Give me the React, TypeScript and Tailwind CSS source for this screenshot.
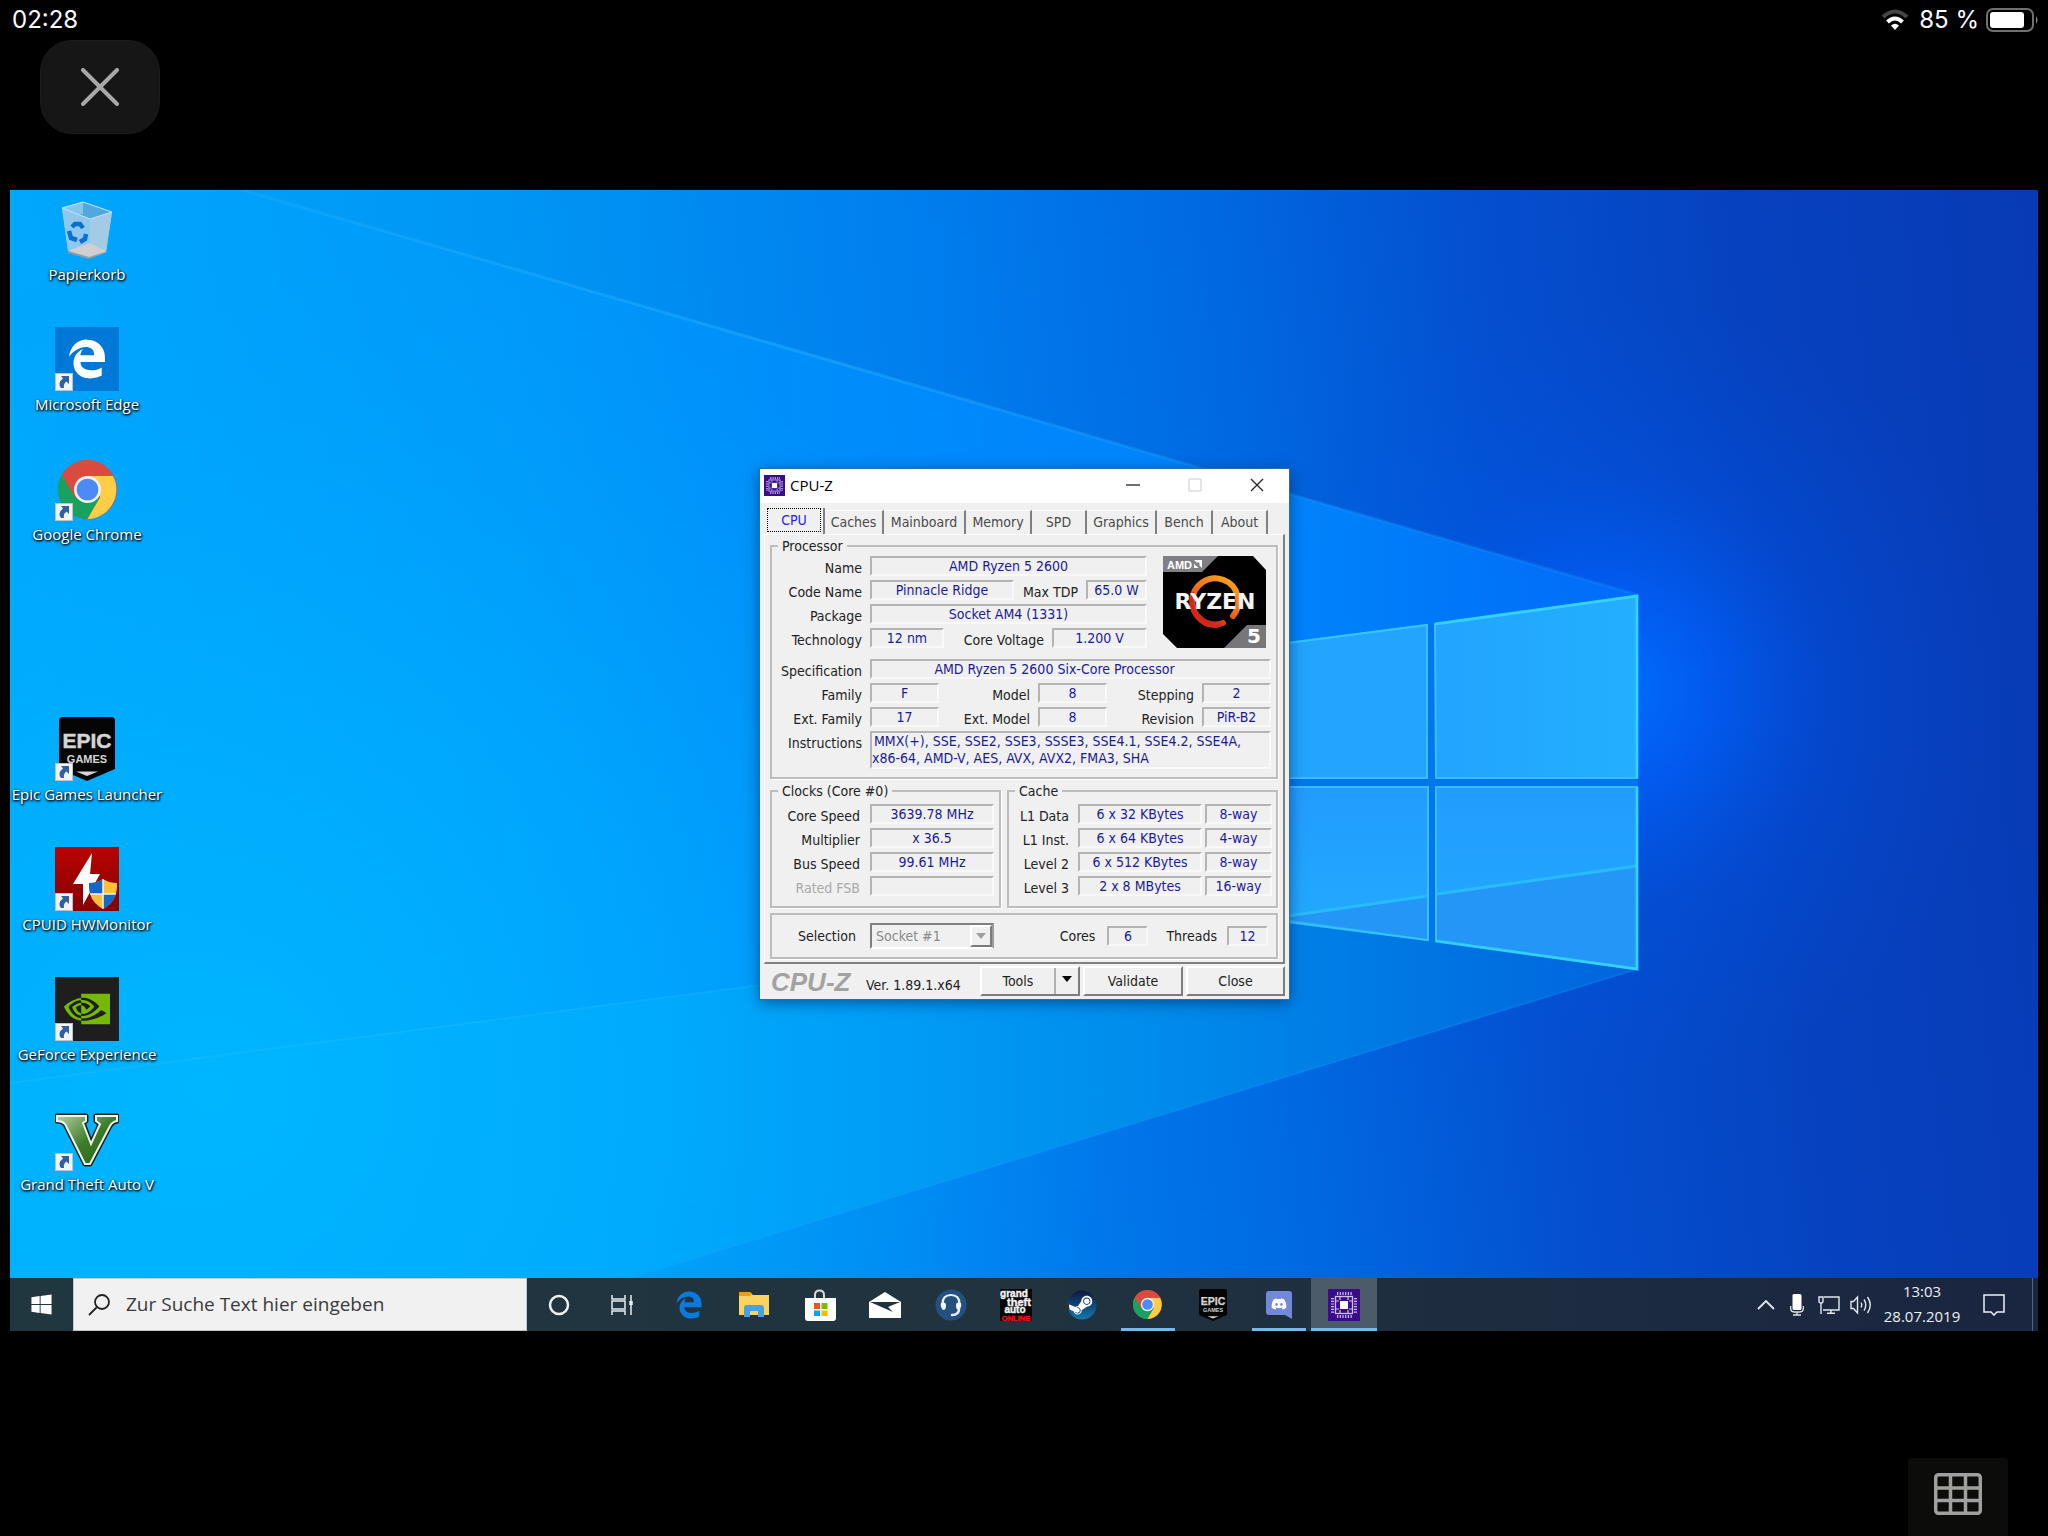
import React from "react";
import { FaDiscord, FaEdgeLegacy, FaSteam, FaWindows } from "react-icons/fa";
import { SiNvidia } from "react-icons/si";

function ChromeLogo({ className }: { className: string }) {
  return (
    <svg viewBox="0 0 48 48" className={className} aria-hidden="true">
      <circle cx="24" cy="24" r="24" fill="#db4a3e" />
      <path d="M3.2 12A24 24 0 0 0 24 48L34.4 30 13.6 30Z" fill="#18a15f" />
      <path d="M24 48A24 24 0 0 0 44.8 13H24L34.4 30Z" fill="#ffce44" />
      <path d="M3.2 12A24 24 0 0 1 45 13H24L13.6 30Z" fill="#db4a3e" />
      <circle cx="24" cy="24" r="11" fill="#f1f1f1" />
      <circle cx="24" cy="24" r="8.8" fill="#4c8bf5" />
    </svg>
  );
}

function EpicLogo({ className }: { className: string }) {
  return (
    <svg viewBox="0 0 56 64" className={className} aria-hidden="true">
      <path d="M4 0H52Q56 0 56 4V52L28 64L0 52V4Q0 0 4 0Z" fill="#050505" />
      <text x="28" y="31" textAnchor="middle" fontFamily="'Liberation Sans Narrow','Liberation Sans',sans-serif" fontWeight="700" fontSize="21" fill="#d5d5d5" stroke="#d5d5d5" strokeWidth="0.5">
        EPIC
      </text>
      <text x="28" y="46" textAnchor="middle" fontFamily="'Liberation Sans',sans-serif" fontWeight="700" fontSize="11" fill="#d5d5d5">
        GAMES
      </text>
      <path d="M17 54.5H39L28 59Z" fill="#d5d5d5" />
    </svg>
  );
}

function ChipLogo({ className }: { className: string }) {
  return (
    <svg viewBox="0 0 32 32" className={className} aria-hidden="true">
      <rect width="32" height="32" fill="#3a0c8c" />
      <g stroke="#cdbff0" fill="none">
        <rect x="7.5" y="7.5" width="17" height="17" strokeWidth="1.3" />
        <path d="M9 4.500H24M9 27.500H24M4.500 9V24M27.500 9V24" strokeWidth="3" strokeDasharray="1.2 1.5" />
        <path d="M12 8v3M20 8v3M12 24v-3M20 24v-3M8 12h3M24 12h-3M8 20h3M24 20h-3" strokeWidth="1.2" />
      </g>
      <rect x="12" y="12" width="8" height="8" fill="#fff" />
    </svg>
  );
}

function DiscordLogo() {
  return (
    <span className="relative flex h-7 w-[26px] justify-center pt-[5px]">
      <svg viewBox="0 0 26 28" className="absolute inset-0 h-7 w-[26px]" aria-hidden="true">
        <path d="M3 0H23Q26 0 26 3V28L19 24H3Q0 24 0 21V3Q0 0 3 0Z" fill="#7289da" />
      </svg>
      <FaDiscord className="relative size-4 text-white" />
    </span>
  );
}

function RecycleBin() {
  return (
    <svg viewBox="0 0 64 64" className="size-16" aria-hidden="true">
      <path d="M7 11 28 5 57 15 51 55 34 61 13 54Z" fill="#9fd0ee" fillOpacity=".85" />
      <path d="M7 11 28 5 57 15 35 22Z" fill="#4fa9dc" />
      <path d="M7 11 28 5V17L22 17Z" fill="#85c7ea" />
      <path d="M35 22 57 15 51 55 34 61Z" fill="#a3cbe4" />
      <path d="M7 11 35 22 34 61 13 54Z" fill="#8fc8ec" />
      <path d="M13 54 34 46 51 54 34 60Z" fill="#d0d0d4" />
      <path d="M13 54v2l21 6 17-6v-1l-17 5Z" fill="#9a9aa0" />
      <path d="M7 11 28 5 57 15 35 22Z" fill="none" stroke="#c5e4f5" strokeWidth="1" />
      <g fill="none" stroke="#0a6fce" strokeWidth="4.5">
        <path d="M17 30 20 27H25L28 31" />
        <path d="M14 34 16 41 22 43" />
        <path d="M31 37 30 42 25 45" />
      </g>
    </svg>
  );
}

function Monitor() {
  return (
    <svg viewBox="0 0 64 64" className="size-16" aria-hidden="true">
      <defs>
        <linearGradient id="hwRed" x1="0" y1="0" x2="0" y2="1">
          <stop offset="0" stopColor="#b80303" />
          <stop offset="1" stopColor="#860000" />
        </linearGradient>
        <clipPath id="shield">
          <path d="M34 36Q42 36 48 32Q54 36 62 36Q63 54 48 62Q33 54 34 36Z" />
        </clipPath>
      </defs>
      <rect width="64" height="64" fill="url(#hwRed)" />
      <path d="M37 6 18 37H28V58L45 27H35Z" fill="#fff" />
      <g clipPath="url(#shield)">
        <rect x="32" y="30" width="32" height="34" fill="#ffc038" />
        <path d="M32 30H48V47H32ZM48 47H64V64H48Z" fill="#1468c8" />
        <path d="M48 30V64M32 47H64" stroke="#f4f4f4" strokeWidth="1.5" />
      </g>
    </svg>
  );
}

function VLogo() {
  return (
    <svg viewBox="0 0 64 64" className="size-16" aria-hidden="true">
      <defs>
        <linearGradient id="vGreen" x1="0" y1="0" x2="1" y2="1">
          <stop offset="0" stopColor="#b5d0a5" />
          <stop offset=".5" stopColor="#3d7d2a" />
          <stop offset="1" stopColor="#1f6312" />
        </linearGradient>
      </defs>
      <path
        d="M2 9H31V14L28 16 36 37 45 17 41 14V9H62V14Q57 15 55 19L35 57H30L10 17Q7 14 2 14Z"
        fill="#16240f"
        stroke="#16240f"
        strokeWidth="5"
        strokeLinejoin="round"
      />
      <path
        d="M2 9H31V14L28 16 36 37 45 17 41 14V9H62V14Q57 15 55 19L35 57H30L10 17Q7 14 2 14Z"
        fill="url(#vGreen)"
        stroke="#f2f2f2"
        strokeWidth="2"
      />
    </svg>
  );
}

function ShortcutBadge() {
  return (
    <svg viewBox="0 0 18 18" className="absolute bottom-0 left-0 size-[18px]" aria-hidden="true">
      <rect x=".5" y=".5" width="17" height="17" fill="#f4f4f4" stroke="#b9c3cc" />
      <path d="M6 3H14V11L11.5 8.500Q8 11 9 15H6Q2 10 8 5.500Z" fill="#2f5fa5" />
    </svg>
  );
}

type DesktopItem = { name: string; icon: React.ReactNode; shortcut: boolean };

const desktopItems: (DesktopItem | null)[] = [
  { name: "Papierkorb", icon: <RecycleBin />, shortcut: false },
  {
    name: "Microsoft Edge",
    icon: (
      <span className="flex size-16 items-center justify-center bg-[#0078d7] text-white">
        <FaEdgeLegacy className="size-10" />
      </span>
    ),
    shortcut: true,
  },
  { name: "Google Chrome", icon: <ChromeLogo className="size-[59px]" />, shortcut: true },
  null,
  { name: "Epic Games Launcher", icon: <EpicLogo className="h-16 w-14" />, shortcut: true },
  { name: "CPUID HWMonitor", icon: <Monitor />, shortcut: true },
  {
    name: "GeForce Experience",
    icon: (
      <span className="flex size-16 items-center justify-center bg-[#1e1e1e] text-[#76b900]">
        <SiNvidia className="size-[46px]" />
      </span>
    ),
    shortcut: true,
  },
  { name: "Grand Theft Auto V", icon: <VLogo />, shortcut: true },
];

function Wallpaper() {
  return (
    <svg viewBox="0 0 2028 1088" preserveAspectRatio="none" className="absolute inset-0 size-full" aria-hidden="true">
      <defs>
        <linearGradient id="base" gradientUnits="userSpaceOnUse" x1="0" y1="200" x2="2028" y2="0">
          <stop offset="0" stopColor="#00a8fc" />
          <stop offset=".25" stopColor="#0096f4" />
          <stop offset=".45" stopColor="#007eee" />
          <stop offset=".6" stopColor="#0068e0" />
          <stop offset=".72" stopColor="#0450d0" />
          <stop offset=".85" stopColor="#0642c0" />
          <stop offset="1" stopColor="#083ab4" />
        </linearGradient>
        <linearGradient id="beam" gradientUnits="userSpaceOnUse" x1="0" y1="0" x2="1630" y2="0">
          <stop offset="0" stopColor="#00a8ff" stopOpacity=".3" />
          <stop offset=".3" stopColor="#009cff" stopOpacity=".55" />
          <stop offset=".6" stopColor="#008cff" stopOpacity=".8" />
          <stop offset=".8" stopColor="#0086ff" stopOpacity=".9" />
          <stop offset="1" stopColor="#0070fa" stopOpacity=".8" />
        </linearGradient>
        <linearGradient id="beamLow" gradientUnits="userSpaceOnUse" x1="0" y1="0" x2="1630" y2="0">
          <stop offset="0" stopColor="#00b4ff" />
          <stop offset=".35" stopColor="#00a8fa" />
          <stop offset=".7" stopColor="#008cec" />
          <stop offset="1" stopColor="#0064dc" />
        </linearGradient>
        <radialGradient id="halo" gradientUnits="userSpaceOnUse" cx="1600" cy="500" r="400">
          <stop offset="0" stopColor="#0070ff" />
          <stop offset=".25" stopColor="#0062ff" stopOpacity=".7" />
          <stop offset=".55" stopColor="#0058f0" stopOpacity=".25" />
          <stop offset="1" stopColor="#0050e0" stopOpacity="0" />
        </radialGradient>
        <radialGradient id="lowGlow" gradientUnits="userSpaceOnUse" cx="200" cy="900" r="900">
          <stop offset="0" stopColor="#00b6ff" />
          <stop offset=".5" stopColor="#00aeff" stopOpacity=".6" />
          <stop offset="1" stopColor="#00a0ff" stopOpacity="0" />
        </radialGradient>
        <linearGradient id="pane" x1="0" y1="0" x2="1" y2="0">
          <stop offset="0" stopColor="#22a4ff" />
          <stop offset="1" stopColor="#22b0ff" />
        </linearGradient>
        <linearGradient id="paneLow" x1="0" y1="0" x2="0" y2="1">
          <stop offset="0" stopColor="#229cff" />
          <stop offset="1" stopColor="#22aaff" />
        </linearGradient>
        <linearGradient id="ray" gradientUnits="userSpaceOnUse" x1="232" y1="0" x2="1628" y2="0">
          <stop offset="0" stopColor="#30b8ff" stopOpacity=".2" />
          <stop offset=".4" stopColor="#20a8ff" stopOpacity=".6" />
          <stop offset=".7" stopColor="#20a0ff" stopOpacity=".3" />
          <stop offset="1" stopColor="#20a0ff" stopOpacity=".2" />
        </linearGradient>
      </defs>
      <rect width="2028" height="1088" fill="url(#base)" />
      <rect width="2028" height="1088" fill="url(#halo)" />
      <path d="M0 0H232L1628 405V779L620 1088H0Z" fill="url(#beam)" />
      <path d="M0 893 1270 727 1627 676V779L620 1088H0Z" fill="url(#beamLow)" />
      <rect width="2028" height="1088" fill="url(#lowGlow)" />
      <path d="M232 0 1628 405" stroke="url(#ray)" strokeWidth="3" />
      <path d="M620 1088 1628 779" stroke="#20a8ff" strokeOpacity=".2" strokeWidth="2" />
      <path d="M0 893 1270 727" stroke="#40c8ff" strokeOpacity=".2" strokeWidth="2" />
      <path d="M1200 588H1627V597H1200ZM1417 434 1425 433V752L1417 751Z" fill="#0078ec" />
      <g stroke="#3cbcff" strokeWidth="2">
        <path d="M1200 463 1417 435V588H1200Z" fill="#22a4ff" />
        <path d="M1425 434 1627 406V588H1426Z" fill="url(#pane)" />
        <path d="M1200 597H1418V750L1200 722Z" fill="url(#paneLow)" />
        <path d="M1426 597H1627V779L1426 751Z" fill="url(#paneLow)" />
      </g>
      <path d="M1270 727 1417 706V749L1270 730ZM1427 704 1626 676V778L1427 751Z" fill="#2496f6" />
      <path d="M1270 727 1417 706M1427 704 1627 676" stroke="#28bcff" strokeWidth="3" />
      <path d="M1200 463 1417 435M1425 434 1627 406V588M1627 597V779L1426 751M1418 750 1200 720" fill="none" stroke="#30d0ff" strokeOpacity=".5" strokeWidth="2" />
      <path d="M1425 434 1627 406V588M1627 597V779L1426 751" fill="none" stroke="#34d8ff" strokeOpacity=".7" strokeWidth="3" />
    </svg>
  );
}

function Label({ children, className = "" }: { children: React.ReactNode; className?: string }) {
  return <span className={`h-5 pt-0.5 text-right leading-5 whitespace-nowrap ${className}`}>{children}</span>;
}

function Field({ children, className = "" }: { children?: React.ReactNode; className?: string }) {
  return (
    <span
      className={`h-5 border-2 border-t-[#b4b4b4] border-r-[#f9f9f9] border-b-[#f9f9f9] border-l-[#b4b4b4] text-center leading-4 whitespace-nowrap text-[#1c1c90] ${className}`}
    >
      {children}
    </span>
  );
}

function Group({ title, className, children }: { title?: string; className: string; children: React.ReactNode }) {
  return (
    <fieldset className={`min-w-0 border-2 border-[#bdbdbd] shadow-[1px_1px_0_#fff] ${className}`}>
      {title && <legend className="ml-1.5 px-1 leading-5">{title}</legend>}
      {children}
    </fieldset>
  );
}

function RyzenBadge() {
  return (
    <svg viewBox="0 0 103 92" className="h-[92px] w-[103px]" role="img" aria-label="AMD Ryzen 5">
      <defs>
        <linearGradient id="enso" x1=".8" y1="0" x2=".2" y2="1">
          <stop offset="0" stopColor="#f9a11b" />
          <stop offset=".5" stopColor="#ec6a1e" />
          <stop offset="1" stopColor="#c01818" />
        </linearGradient>
        <clipPath id="chip">
          <path d="M0 0H90L103 14V92H14L0 78Z" />
        </clipPath>
      </defs>
      <g clipPath="url(#chip)">
        <rect width="103" height="92" fill="#000" />
        <path d="M0 0H55L39 16H0Z" fill="#808084" />
        <path d="M84 69H103V92H61Z" fill="#77777b" />
      </g>
      <text x="4" y="13" fontFamily="'Liberation Sans',sans-serif" fontWeight="700" fontSize="11" fill="#fff">
        AMD
      </text>
      <path d="M31 4H39V12L36.5 9.500V6.500H33.500ZM31 7.500V12H35.500L33.500 10H33Z" fill="#fff" />
      <path d="M60 67A23 23 0 1 1 70 60" fill="none" stroke="url(#enso)" strokeWidth="6" strokeLinecap="round" />
      <path d="M54 70A24 24 0 0 1 30 38" fill="none" stroke="#d2281c" strokeWidth="4" strokeLinecap="round" />
      <text x="52" y="53" textAnchor="middle" fontFamily="'DejaVu Sans',sans-serif" fontWeight="700" fontSize="22" fill="#f4f4f4">
        RYZEN
      </text>
      <text x="91" y="87" textAnchor="middle" fontFamily="'DejaVu Sans',sans-serif" fontWeight="700" fontSize="20" fill="#fff">
        5
      </text>
    </svg>
  );
}

const tabs = [
  { name: "CPU", width: "w-[60px]" },
  { name: "Caches", width: "w-[59px]" },
  { name: "Mainboard", width: "w-[82px]" },
  { name: "Memory", width: "w-[66px]" },
  { name: "SPD", width: "w-[55px]" },
  { name: "Graphics", width: "w-[70px]" },
  { name: "Bench", width: "w-[56px]" },
  { name: "About", width: "w-[55px]" },
];

const clocks = [
  ["Core Speed", "3639.78 MHz"],
  ["Multiplier", "x 36.5"],
  ["Bus Speed", "99.61 MHz"],
  ["Rated FSB", ""],
];

const caches = [
  ["L1 Data", "6 x 32 KBytes", "8-way"],
  ["L1 Inst.", "6 x 64 KBytes", "4-way"],
  ["Level 2", "6 x 512 KBytes", "8-way"],
  ["Level 3", "2 x 8 MBytes", "16-way"],
];

const raised = "border-2 border-t-white border-l-white border-r-[#7c7c7c] border-b-[#7c7c7c] bg-[#f0f0f0]";

function CpuzWindow() {
  return (
    <section
      aria-label="CPU-Z"
      className="absolute top-[279px] left-[750px] w-[529px] bg-[#f0f0f0] pb-[3px] font-['DejaVu_Sans_Condensed','Noto_Sans',sans-serif] text-[14px] text-[#222] shadow-[0_3px_14px_rgba(0,20,60,.55)] outline outline-[#2a6da8]"
    >
      <header className="flex h-[34px] items-center bg-white pb-0.5 pl-1">
        <ChipLogo className="size-[21px]" />
        <h1 className="ml-[5px] flex-1 font-['Open_Sans',sans-serif] text-[15px] text-black">CPU-Z</h1>
        <button aria-label="Minimieren" className="flex h-8 w-[62px] items-center justify-center">
          <svg viewBox="0 0 14 14" className="size-3.5" stroke="#222" strokeWidth="1.3"><path d="M0 7H14" /></svg>
        </button>
        <button aria-label="Maximieren" disabled className="flex h-8 w-[62px] items-center justify-center">
          <svg viewBox="0 0 14 14" className="size-3.5" stroke="#ccc" fill="none"><path d="M1 1H13V13H1Z" /></svg>
        </button>
        <button aria-label="Schließen" className="mr-px flex h-8 w-[62px] items-center justify-center">
          <svg viewBox="0 0 14 14" className="size-3.5" stroke="#222" strokeWidth="1.3"><path d="M1 1 13 13M13 1 1 13" /></svg>
        </button>
      </header>

      <div role="tablist" className="mx-[5px] flex h-[31px] items-end">
        {tabs.map((tab, index) =>
          index === 0 ? (
            <button key={tab.name} role="tab" aria-selected="true" className={`h-[26px] border-r-2 border-r-[#808080] px-0.5 pb-0.5 text-[#2525f0] ${tab.width}`}>
              <span className="block border border-dotted border-black leading-[22px]">{tab.name}</span>
            </button>
          ) : (
            <button key={tab.name} role="tab" aria-selected="false" className={`h-6 border-t border-r-2 border-t-white border-r-[#808080] text-center leading-[23px] text-[#4a4a4a] ${tab.width}`}>
              {tab.name}
            </button>
          ),
        )}
      </div>

      <div role="tabpanel" className="mx-1 border-t border-r-2 border-b-2 border-l border-t-white border-r-[#808080] border-b-[#808080] border-l-white px-[5px] pt-px pb-[3px]">
        <Group title="Processor" className="h-[243px]">
          <div className="flex justify-between">
            <div className="flex flex-col gap-1">
              <div className="flex gap-2">
                <Label className="w-[90px]">Name</Label>
                <Field className="w-[277px]">AMD Ryzen 5 2600</Field>
              </div>
              <div className="flex gap-2">
                <Label className="w-[90px]">Code Name</Label>
                <Field className="w-36">Pinnacle Ridge</Field>
                <Label className="w-14">Max TDP</Label>
                <Field className="w-[61px]">65.0 W</Field>
              </div>
              <div className="flex gap-2">
                <Label className="w-[90px]">Package</Label>
                <Field className="w-[277px]">Socket AM4 (1331)</Field>
              </div>
              <div className="flex gap-2">
                <Label className="w-[90px]">Technology</Label>
                <Field className="w-[74px]">12 nm</Field>
                <Label className="w-[92px]">Core Voltage</Label>
                <Field className="w-[95px]">1.200 V</Field>
              </div>
            </div>
            <div className="pr-2.5">
              <RyzenBadge />
            </div>
          </div>
          <div className="mt-[11px] grid grid-cols-[90px_69px_83px_69px_79px_69px] gap-x-2 gap-y-1">
            <Label>Specification</Label>
            <Field className="col-span-5 pr-8">AMD Ryzen 5 2600 Six-Core Processor</Field>
            <Label>Family</Label>
            <Field>F</Field>
            <Label>Model</Label>
            <Field>8</Field>
            <Label>Stepping</Label>
            <Field>2</Field>
            <Label>Ext. Family</Label>
            <Field>17</Field>
            <Label>Ext. Model</Label>
            <Field>8</Field>
            <Label>Revision</Label>
            <Field>PiR-B2</Field>
            <Label>Instructions</Label>
            <p className="col-span-5 border-2 border-t-[#b4b4b4] border-r-[#f9f9f9] border-b-[#f9f9f9] border-l-[#b4b4b4] leading-[17px] whitespace-nowrap text-[#1c1c90]">
              <span className="pl-0.5">MMX(+), SSE, SSE2, SSE3, SSSE3, SSE4.1, SSE4.2, SSE4A,</span>
              <br />
              x86-64, AMD-V, AES, AVX, AVX2, FMA3, SHA
            </p>
          </div>
        </Group>

        <div className="mt-0.5 flex gap-1.5">
          <Group title="Clocks (Core #0)" className="h-[127px] w-[231px]">
            <div className="mt-[3px] flex flex-col gap-1">
              {clocks.map(([name, value]) => (
                <div key={name} className="flex gap-2.5">
                  <Label className={value ? "w-[88px]" : "w-[88px] text-[#a9a9a9]"}>{name}</Label>
                  <Field className="w-[124px]">{value}</Field>
                </div>
              ))}
            </div>
          </Group>
          <Group title="Cache" className="h-[127px] flex-1">
            <div className="mt-[3px] flex flex-col gap-1">
              {caches.map(([name, size, way]) => (
                <div key={name} className="flex gap-[3px]">
                  <Label className="mr-1.5 w-[60px]">{name}</Label>
                  <Field className="w-[124px]">{size}</Field>
                  <Field className="w-[67px]">{way}</Field>
                </div>
              ))}
            </div>
          </Group>
        </div>

        <Group className="mt-[5px] flex h-[46px] items-center pr-2">
          <label htmlFor="socket" className="w-[84px] text-right">Selection</label>
          <span className="relative ml-3.5">
            <select
              id="socket"
              disabled
              className="h-[26px] w-[124px] appearance-none border-2 border-t-[#808080] border-r-[#9c9c9c] border-b-white border-l-[#808080] bg-[#f0f0f0] pl-1 text-[#8a8a8a] opacity-100"
            >
              <option>Socket #1</option>
            </select>
            <span className={`pointer-events-none absolute top-0.5 right-0.5 flex h-[22px] w-[22px] items-center justify-center ${raised}`}>
              <svg viewBox="0 0 10 6" className="h-1.5 w-2.5" fill="#a0a0a0"><path d="M0 0H10L5 6Z" /></svg>
            </span>
          </span>
          <span className="ml-auto">Cores</span>
          <Field className="ml-3 w-[41px]">6</Field>
          <span className="ml-[18px]">Threads</span>
          <Field className="ml-2.5 w-[41px]">12</Field>
        </Group>
      </div>

      <footer className="mt-0.5 flex h-[30px] items-center pr-1 pl-[11px]">
        <span className="w-[95px] pt-0.5 font-['Liberation_Sans',sans-serif] text-[26px] font-bold text-[#a2a2a2] italic">CPU-Z</span>
        <span className="pt-2 whitespace-nowrap">Ver. 1.89.1.x64</span>
        <div className="ml-auto flex gap-[3px]">
          <div className={`flex h-[30px] w-[100px] ${raised}`}>
            <button className="flex-1 border-r-2 border-[#b0b0b0]">Tools</button>
            <button aria-label="Weitere Werkzeuge" className="flex w-[22px] items-center justify-center pb-1">
              <svg viewBox="0 0 10 6" className="h-1.5 w-2.5" fill="#000"><path d="M0 0H10L5 6Z" /></svg>
            </button>
          </div>
          <button className={`h-[30px] w-[100px] ${raised}`}>Validate</button>
          <button className={`h-[30px] w-[99px] ${raised}`}>Close</button>
        </div>
      </footer>
    </section>
  );
}

const apps = [
  {
    name: "Microsoft Edge",
    state: "idle",
    icon: <FaEdgeLegacy className="size-7 text-[#0a7ae0]" />,
  },
  {
    name: "Explorer",
    state: "idle",
    icon: (
      <svg viewBox="0 0 30 26" className="h-[26px] w-[30px]">
        <path d="M0 0H11L14 3H30V23H0Z" fill="#fbd35e" />
        <path d="M0 0H11L13 2 11 4H0Z" fill="#e3a018" />
        <path d="M5 25V16Q5 13 8 13H22Q25 13 25 16V25H19V19H11V25Z" fill="#4ba0e0" />
      </svg>
    ),
  },
  {
    name: "Microsoft Store",
    state: "idle",
    icon: (
      <svg viewBox="0 0 32 32" className="size-8">
        <path d="M11 10V6Q11 1.5 15.5 1.5T20 6V10" fill="none" stroke="#d5d9dc" strokeWidth="2" />
        <path d="M1 9H32V29Q32 32 29 32H4Q1 32 1 29Z" fill="#fff" />
        <path d="M10 14H16V20H10Z" fill="#f25022" />
        <path d="M17.5 14H23.500V20H17.500Z" fill="#7fba00" />
        <path d="M10 21.500H16V27H10Z" fill="#00a4ef" />
        <path d="M17.5 21.500H23.500V27H17.500Z" fill="#ffb900" />
      </svg>
    ),
  },
  {
    name: "Mail",
    state: "idle",
    icon: (
      <svg viewBox="0 0 32 26" className="h-[26px] w-8">
        <path d="M0 10 16 0 32 10V26H0Z" fill="#fff" />
        <path d="M1 10H31L19 15 24 20 1 10Z" fill="#20323d" />
      </svg>
    ),
  },
  {
    name: "TeamSpeak",
    state: "idle",
    icon: (
      <svg viewBox="0 0 32 32" className="size-8">
        <circle cx="16" cy="16" r="15.5" fill="#245080" />
        <path d="M7.5 15Q7.5 6 16 6T24.5 15" fill="none" stroke="#e8eef4" strokeWidth="2.2" />
        <path d="M6 14Q11 12 11 16.500T8 21Q5 18 6 14ZM26 14Q21 12 21 16.500T24 21Q27 18 26 14Z" fill="#f4f7fa" />
        <path d="M24 20Q24 26 17 26" fill="none" stroke="#e8eef4" strokeWidth="2.5" strokeLinecap="round" />
      </svg>
    ),
  },
  {
    name: "Grand Theft Auto Online",
    state: "idle",
    icon: (
      <svg viewBox="0 0 32 32" className="size-8">
        <rect width="32" height="32" fill="#050505" />
        <g fontFamily="'Liberation Sans',sans-serif" fontWeight="700" fill="#f4f4f4" stroke="#f4f4f4" strokeWidth=".4" textAnchor="middle">
          <text x="14" y="8" fontSize="10">grand</text>
          <text x="19" y="17" fontSize="11">theft</text>
          <text x="15" y="24" fontSize="10">auto</text>
          <text x="16" y="31.500" fontSize="7.500" fill="#f01414" stroke="#f01414">ONLINE</text>
        </g>
      </svg>
    ),
  },
  {
    name: "Steam",
    state: "idle",
    icon: (
      <span className="relative flex size-[30px] items-center justify-center">
        <span className="absolute inset-[2px] rounded-full bg-white" />
        <svg className="absolute size-0" aria-hidden="true">
          <linearGradient id="steamBlue" x1="0" y1="0" x2="0" y2="1">
            <stop offset="0" stopColor="#10163c" />
            <stop offset="1" stopColor="#1478b0" />
          </linearGradient>
        </svg>
        <FaSteam className="relative size-[30px] fill-[url(#steamBlue)]" />
      </span>
    ),
  },
  { name: "Google Chrome", state: "open", icon: <ChromeLogo className="size-[29px]" /> },
  { name: "Epic Games Launcher", state: "idle", icon: <EpicLogo className="h-8 w-7" /> },
  { name: "Discord", state: "open", icon: <DiscordLogo /> },
  { name: "CPU-Z", state: "active", icon: <ChipLogo className="size-8" /> },
];

const appStates: Record<string, string> = {
  idle: "",
  open: "after:absolute after:bottom-0 after:h-[3px] after:w-[54px] after:bg-[#76b9ed]",
  active: "bg-[#4c5b69] after:absolute after:bottom-0 after:h-[3px] after:w-full after:bg-[#76b9ed]",
};

function Taskbar() {
  return (
    <nav
      aria-label="Taskleiste"
      className="relative flex h-[53px] items-stretch bg-linear-to-r from-[#20373f] via-[#20333f] via-50% to-[#1a2540] font-['Open_Sans',sans-serif] text-white"
    >
      <button aria-label="Start" className="flex w-[63px] items-center justify-center">
        <FaWindows className="size-[23px]" />
      </button>
      <div className="flex w-[454px] items-center gap-4 border border-[#c4c8ca] bg-[#f1f1f1] pl-3.5">
        <svg viewBox="0 0 22 22" className="size-[22px]" fill="none" stroke="#222" strokeWidth="1.8">
          <circle cx="14" cy="8" r="7" />
          <path d="M9 13 1 21" />
        </svg>
        <input
          type="text"
          aria-label="Suche"
          placeholder="Zur Suche Text hier eingeben"
          className="min-w-0 flex-1 bg-transparent text-[19px] text-[#333] outline-none placeholder:text-[#3a3a3a]"
        />
      </div>
      <div className="grid grid-cols-[63px_66px]">
        <button aria-label="Cortana" className="flex items-center justify-center">
          <svg viewBox="0 0 22 22" className="size-[22px]" fill="none" stroke="#f0f0f0" strokeWidth="2.5">
            <circle cx="11" cy="11" r="9" />
          </svg>
        </button>
        <button aria-label="Taskansicht" className="flex items-center justify-center pr-0.5">
          <svg viewBox="0 0 22 22" className="size-[22px]" fill="none" stroke="#e8eef0" strokeWidth="1.5">
            <path d="M1 1V5H14V1M1 21V17H14V21M1 7H14V15H1ZM20 1V21" />
            <path d="M20 7V11" strokeWidth="3.5" />
          </svg>
        </button>
      </div>
      <div className="grid w-[721px] grid-cols-11">
        {apps.map((app) => (
          <button key={app.name} aria-label={app.name} className={`relative flex items-center justify-center ${appStates[app.state]}`}>
            {app.icon}
          </button>
        ))}
      </div>
      <div className="ml-auto flex items-center">
        <svg viewBox="0 0 18 10" className="mr-[15px] h-2.5 w-[18px]" fill="none" stroke="#e4e8ee" strokeWidth="1.8">
          <path d="M1 9 9 1 17 9" />
        </svg>
        <svg viewBox="0 0 14 22" className="mr-[14px] h-[22px] w-3.5" aria-label="Mikrofon">
          <rect x="2.5" y="0" width="9" height="16" rx="1.5" fill="#fff" />
          <path d="M.7 12V15Q1 18 4 18H10Q13 18 13.3 15V12M7 18V21M3 21H11" fill="none" stroke="#dfe3ea" strokeWidth="1.3" />
        </svg>
        <svg viewBox="0 0 22 20" className="mr-[10px] h-5 w-[22px]" fill="none" stroke="#e4e8ee" strokeWidth="1.4" aria-label="Netzwerk">
          <path d="M6 2H21V15H5M13 15V18M9 18.300H17M3 8V19" />
          <path d="M1 2H5V6Q5 8 3 8T1 6Z" />
        </svg>
        <svg viewBox="0 0 22 20" className="mr-2.5 h-5 w-[22px]" fill="none" stroke="#e4e8ee" strokeWidth="1.4" aria-label="Lautstärke">
          <path d="M1 6.500H3.500L7.500 2V18L3.500 13.500H1ZM11 7.500Q12.5 10 11 12.500M14 4.500Q17.5 10 14 15.500M17.500 2Q23 10 17.500 18" />
        </svg>
        <time className="w-20 pb-0.5 text-center text-[15px] leading-[25px] text-[#eef0f4]">
          13:03
          <br />
          28.07.2019
        </time>
        <button aria-label="Benachrichtigungen" className="ml-5 flex h-full w-6 items-center justify-center">
          <svg viewBox="0 0 22 22" className="size-[22px]" fill="none" stroke="#eef0f4" strokeWidth="1.5">
            <path d="M1 1H21V18H14L11 21 8 18H1Z" />
          </svg>
        </button>
        <span className="mr-[5px] ml-[26px] h-[53px] w-px bg-[#5a6478]" />
      </div>
    </nav>
  );
}

export default function App() {
  return (
    <div className="flex min-h-screen flex-col bg-black">
      <header className="flex h-10 items-center justify-between pr-2 pb-px pl-3 font-[Inter,sans-serif] text-2xl text-white">
        <time>02:28</time>
        <div className="flex items-center">
          <svg viewBox="0 0 28 21" className="mr-2.5 h-[21px] w-7" fill="none" aria-label="WLAN">
            <path d="M2 8Q14-3 26 8" stroke="#444" strokeWidth="4" />
            <path d="M6.5 13Q14 6 21.5 13" stroke="#fff" strokeWidth="4" />
            <path d="M10 16.500Q14 13 18 16.500L14 21Z" fill="#fff" />
          </svg>
          <span>85 %</span>
          <svg viewBox="0 0 54 24" className="ml-[7px] h-6 w-[54px]" aria-label="Akku">
            <rect x="1" y="1" width="46" height="22" rx="6" fill="none" stroke="#707070" strokeWidth="2" />
            <rect x="4" y="4" width="34" height="16" rx="3" fill="#fff" />
            <path d="M50 8Q53 12 50 16Z" fill="#8a8a8a" />
          </svg>
        </div>
      </header>

      <button
        aria-label="Schließen"
        className="mb-14 ml-10 flex h-[94px] w-[120px] items-center justify-center rounded-[32px] border border-[#1c1c1c] bg-[#161616]"
      >
        <svg viewBox="0 0 38 38" className="size-[38px]" stroke="#a8a8a8" strokeWidth="4" strokeLinecap="round">
          <path d="M2 2 36 36M36 2 2 36" />
        </svg>
      </button>

      <main className="relative mx-2.5 overflow-hidden bg-[#0084f0]">
        <div className="relative pt-[7px] pb-[41px]">
          <Wallpaper />
          <ul className="relative grid w-[154px] auto-rows-[130px]">
            {desktopItems.map((item, index) =>
              item ? (
                <li key={item.name} className="flex flex-col items-center">
                  <span className="relative flex size-16 items-center justify-center">
                    {item.icon}
                    {item.shortcut && <ShortcutBadge />}
                  </span>
                  <span className="mt-[3px] font-['Open_Sans',sans-serif] text-[15px] leading-5 whitespace-nowrap text-white [text-shadow:1px_1px_2px_#000,0_1px_3px_#000]">
                    {item.name}
                  </span>
                </li>
              ) : (
                <li key={index} aria-hidden="true" />
              ),
            )}
          </ul>
          <CpuzWindow />
        </div>
        <Taskbar />
      </main>

      <button
        aria-label="Tastatur"
        className="mt-auto mr-10 flex h-[78px] w-[100px] justify-center self-end rounded-t bg-[#0c0c0b] pt-[15px]"
      >
        <svg viewBox="0 0 48 42" className="h-[42px] w-12" fill="none" stroke="#a0a0a0" strokeWidth="3.5">
          <rect x="1.7" y="1.7" width="44.600" height="38.600" rx="3" />
          <path d="M16.5 2V40M31.500 2V40M2 15H46M2 27.500H46" />
        </svg>
      </button>
    </div>
  );
}
